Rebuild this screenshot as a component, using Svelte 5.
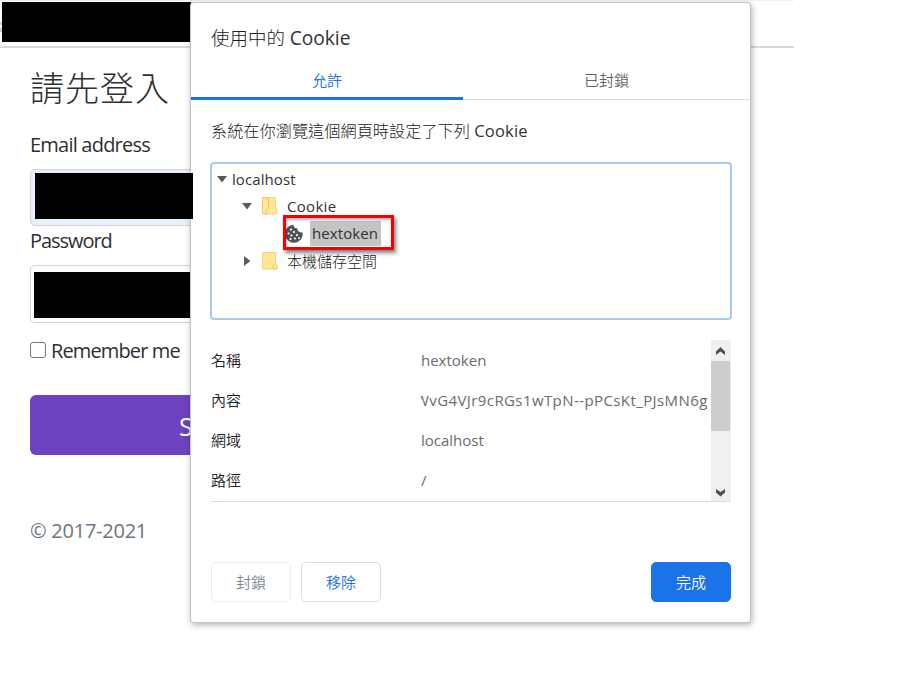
<script>
  const details = [
    { label: '名稱', value: 'hextoken', cls: 'v-name' },
    { label: '內容', value: 'WvG4VJr9cRGs1wTpN--pPCsKt_PJsMN6g', cls: 'v-content' },
    { label: '網域', value: 'localhost', cls: 'v-domain' },
    { label: '路徑', value: '/', cls: 'v-path' }
  ];
</script>

<div class="screen">
  <main class="page">
    <header class="topbar">
      <svg class="sliver" width="2" height="12" viewBox="0 0 2 12"><path d="M1 1v3M1 7v4" stroke="#b29a78" stroke-width="1" /></svg>
      <div class="mask mask-top"></div>
    </header>
    <form class="login">
      <h1>請先登入</h1>
      <label class="field-label email" for="email">Email address</label>
      <div class="field filled" id="email"><div class="mask mask-email"></div></div>
      <label class="field-label password" for="password">Password</label>
      <div class="field plain" id="password"><div class="mask mask-password"></div></div>
      <div class="remember"><span class="check"></span><span class="remember-text">Remember me</span></div>
      <div class="signin">S</div>
      <p class="copy">© 2017-2021</p>
    </form>
  </main>

  <section class="dialog">
    <h2>使用中的 <span class="latin">Cookie</span></h2>
    <nav>
      <div class="tab active">允許</div>
      <div class="tab">已封鎖</div>
    </nav>
    <div class="body">
      <p class="intro">系統在你瀏覽這個網頁時設定了下列 <span class="latin">Cookie</span></p>
      <div class="tree">
        <div class="row root">
          <svg width="12" height="12" viewBox="0 0 12 12"><path d="M1 3h10L6 9.4z" fill="#5a5a5a" /></svg>
          <span class="t-root">localhost</span>
        </div>
        <div class="row branch">
          <svg width="12" height="12" viewBox="0 0 12 12"><path d="M1 3h10L6 9.4z" fill="#5a5a5a" /></svg>
          <svg class="folder" width="18" height="20" viewBox="0 0 18 20">
            <path d="M4 1.500h10.500v9.500l1.500 2v5H4z" fill="#ffe696" stroke="#f6d478" />
            <path d="M1.500 1.500h2.500l3.500 2.500v8.500l-2.500 1.500v4.500l-3.500-1z" fill="#ffe9a2" stroke="#efc75a" />
          </svg>
          <span class="t-cookie">Cookie</span>
        </div>
        <div class="row leaf">
          <svg class="cookie" width="20" height="20" viewBox="0 0 20 20">
            <path d="M9.500.8c.2 2.500 1.400 3.700 3.600 3.500.2 2.700 2 4.200 5.700 4.500A9 9 0 1 1 9.500.8z" fill="#50545a" />
            <g fill="#fff"><circle cx="7" cy="5.500" r="1.100" /><circle cx="10" cy="8" r="1.100" /><circle cx="4.500" cy="9.500" r="1.100" /><circle cx="7.500" cy="11.500" r="1.100" /><circle cx="13" cy="11" r="1.100" /><circle cx="6.500" cy="15" r="1.100" /><circle cx="11" cy="14.500" r="1.100" /><circle cx="15" cy="14" r="0.900" /></g>
          </svg>
          <span class="t-hex">hextoken</span>
        </div>
        <div class="row branch last">
          <svg width="12" height="12" viewBox="0 0 12 12"><path d="M3 1v10l6.400-5z" fill="#5a5a5a" /></svg>
          <svg class="folder" width="18" height="20" viewBox="0 0 18 20">
            <path d="M1.500 1.500h13v11l1.500 2v3.500h-14.500z" fill="#ffe696" stroke="#f6d478" />
            <path d="M12.500 18v-4l2-1.500 1.500 2V18z" fill="#ffe9a2" stroke="#efc75a" />
          </svg>
          <span class="t-local">本機儲存空間</span>
        </div>
        <div class="highlight"></div>
      </div>
      <div class="details">
        <div class="list">
          {#each details as item}
            <div class="detail"><span class="key">{item.label}</span><span class="val"><span class={item.cls}>{item.value}</span></span></div>
          {/each}
        </div>
        <div class="scroll">
          <svg width="19" height="21" viewBox="0 0 19 21"><path d="M9.500 7L14 11.500V15L9.500 11.500 5 15v-3.500z" fill="#505050" /></svg>
          <div class="thumb"></div>
          <svg width="19" height="18" viewBox="0 0 19 18"><path d="M9.500 13.500L14 9.500V6L9.500 9 5 6v3.500z" fill="#505050" /></svg>
        </div>
      </div>
      <footer>
        <div class="btn disabled">封鎖</div>
        <div class="btn">移除</div>
        <div class="btn primary">完成</div>
      </footer>
    </div>
  </section>
</div>

<style>
  .screen {
    position: relative;
    width: 902px;
    height: 691px;
    overflow: hidden;
    background: #fff;
    color: #2c3034;
    font-family: "Open Sans", "Noto Sans CJK TC", sans-serif;
    font-weight: 400;
  }
  .screen * { box-sizing: border-box; }
  h1, h2, p { margin: 0; white-space: nowrap; }
  .page { width: 794px; }
  .topbar {
    display: flex;
    height: 48px;
    border-top: 1px solid #f1f1f1;
    border-bottom: 2px solid #dad9df;
  }
  .sliver { margin-top: 20px; flex: none; }
  .mask { background: #000; }
  .mask-top { width: 189px; height: 40px; margin-top: 1px; }
  .login { display: flex; flex-direction: column; padding-left: 30px; }
  h1 {
    height: 50px;
    margin-top: 14px;
    font: 300 34px/50px "Noto Sans CJK TC", sans-serif;
    letter-spacing: 1px;
  }
  .field-label { height: 30px; font-size: 20px; line-height: 30px; white-space: nowrap; }
  .email { margin-top: 18px; letter-spacing: -0.78px; }
  .password { letter-spacing: -1.05px; }
  .field { width: 378px; border: 1px solid #ced4da; border-radius: 5px; }
  .filled { height: 57px; margin-top: 9px; padding: 3px 0 0 4px; background: #e8f0fe; }
  .plain { height: 58px; margin-top: 9px; padding: 6px 0 0 3px; }
  .mask-email { position: relative; z-index: 3; width: 158px; height: 46px; }
  .mask-password { width: 156px; height: 46px; }
  .remember { display: flex; align-items: center; height: 30px; margin-top: 13px; }
  .check { width: 16px; height: 16px; border: 1px solid #767676; border-radius: 3px; margin-top: -2px; }
  .remember-text { margin-left: 5px; font-size: 20px; line-height: 32px; letter-spacing: -0.88px; }
  .signin {
    width: 378px;
    height: 60px;
    margin-top: 29px;
    padding-left: 149px;
    border-radius: 6px;
    background: #6f42c1;
    color: #fff;
    font-size: 25px;
    line-height: 62px;
  }
  .copy { height: 30px; margin-top: 61px; font-size: 20px; line-height: 30px; color: #6c757d; letter-spacing: -0.25px; }

  .dialog {
    position: absolute;
    z-index: 2;
    left: 191px;
    top: 3px;
    width: 559px;
    height: 619px;
    display: flex;
    flex-direction: column;
    border-radius: 3px;
    background: #fff;
    box-shadow: 0 0 0 1px #c4c4c4, 1px 2px 6px 1px rgba(0, 0, 0, 0.3);
    color: #202124;
  }
  .latin { font-weight: 400; color: #303236; }
  h2 { height: 59px; padding: 20px 0 0 20px; font-size: 18.500px; line-height: 30px; font-weight: 300; }
  h2 .latin { font-size: 19.200px; letter-spacing: -0.05px; }
  nav { display: flex; flex: none; height: 38px; border-bottom: 1px solid #dadce0; }
  .tab { flex: 1; text-align: center; font-size: 15px; line-height: 36px; color: #5f6368; font-weight: 350; }
  .active { flex: 0 0 272px; height: 38px; border-bottom: 3px solid #1a73e8; color: #1a73e8; }
  .body { display: flex; flex-direction: column; width: 560px; padding: 0 20px; }
  .intro { height: 24px; margin-top: 19px; font-size: 16.200px; line-height: 24px; font-weight: 300; }
  .intro .latin { font-size: 16.500px; letter-spacing: 0.2px; }
  .tree {
    position: relative;
    height: 158px;
    margin: 19px -1px 0;
    padding: 1px 0 0 3px;
    border: 2px solid #a9c9f3;
    border-radius: 4px;
    color: #303236;
    font-size: 15px;
    letter-spacing: 0.08px;
  }
  .row { display: flex; align-items: center; height: 27.400px; white-space: nowrap; }
  .root { padding-left: 1px; }
  .branch { padding-left: 26px; }
  .leaf { padding-left: 69px; }
  .leaf .t-hex, .leaf .cookie { margin-top: 1px; }
  .folder { margin-left: 8px; }
  .t-root { margin-left: 4px; }
  .t-cookie { margin-left: 8px; letter-spacing: 0.3px; }
  .t-local { margin-left: 8px; color: #202124; font-weight: 300; letter-spacing: 0; }
  .t-hex { height: 25px; margin-left: 6px; padding: 0 3px 0 2px; line-height: 25px; background: #c4c4c4; }
  .highlight {
    position: absolute;
    left: 71px;
    top: 51px;
    width: 111px;
    height: 35px;
    border: 3px solid #f50000;
    box-shadow: 2px 3px 4px rgba(0, 0, 0, 0.5), inset 1px 2px 3px rgba(0, 0, 0, 0.3);
  }
  .details { display: flex; height: 162px; margin-top: 20px; border-bottom: 1px solid #dadce0; }
  .list { width: 500px; }
  .detail { display: flex; height: 40px; font-size: 15px; line-height: 40px; }
  .key { width: 210px; font-weight: 350; }
  .val { display: flex; width: 287px; overflow: hidden; color: #686c71; white-space: nowrap; }
  .v-content { margin-left: -6px; letter-spacing: 0.41px; }
  .scroll { display: flex; flex-direction: column; justify-content: space-between; width: 20px; background: #f0f0f0; }
  .scroll svg { flex: none; }
  .thumb { width: 19px; height: 70px; margin-bottom: auto; background: #cdcdcd; }
  footer { display: flex; margin-top: 60px; gap: 10px; }
  .btn {
    width: 80px;
    height: 40px;
    border: 1px solid #dadce0;
    border-radius: 5px;
    text-align: center;
    font-size: 15px;
    line-height: 38px;
    color: #1a73e8;
    font-weight: 350;
  }
  .disabled { border-color: #ececee; color: #80868b; }
  .primary { margin-left: auto; border-color: #1a73e8; background: #1a73e8; color: #fff; }
</style>
